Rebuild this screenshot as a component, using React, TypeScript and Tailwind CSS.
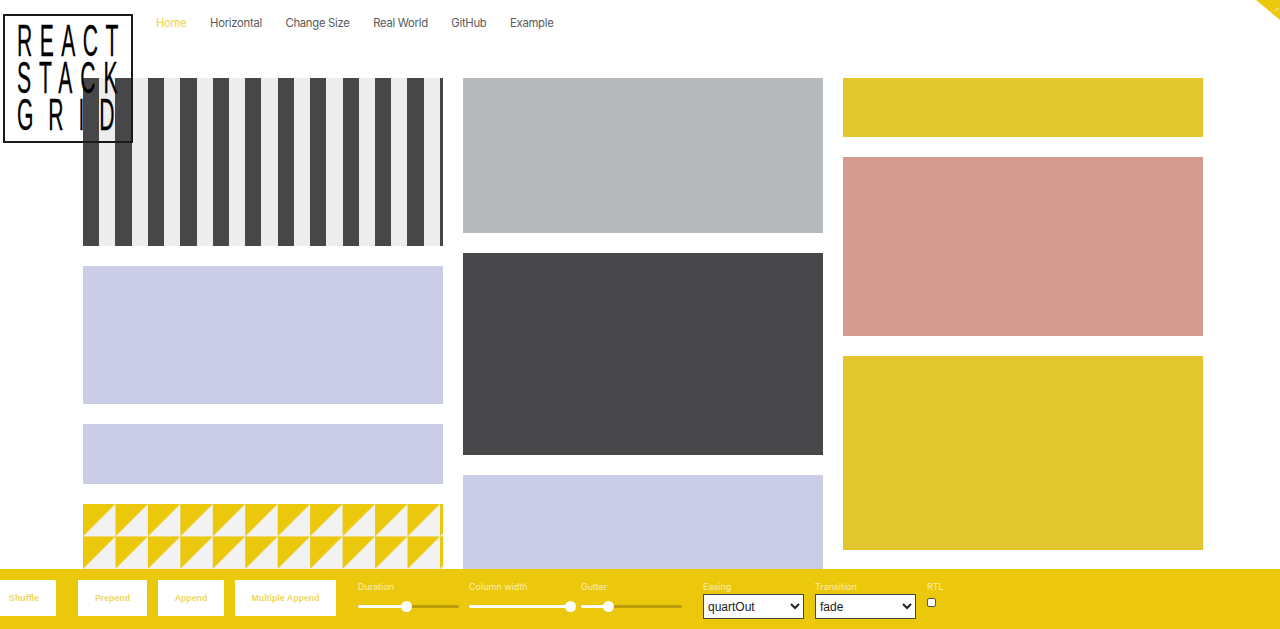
import { useState } from 'react';

const navLinks = ['Home', 'Horizontal', 'Change Size', 'Real World', 'GitHub', 'Example'];

function TrianglePattern() {
  return (
    <svg className="block w-full h-full" aria-hidden="true">
      <defs>
        <pattern id="triangles" x="0" y="0" width="32.45" height="32.45" patternUnits="userSpaceOnUse">
          <rect width="32.45" height="32.45" fill="#f2f2f2" />
          <path d="M0 0H32.45L0 32.45Z" fill="#ecc80d" />
        </pattern>
      </defs>
      <rect width="100%" height="100%" fill="url(#triangles)" />
    </svg>
  );
}

function Slider({ label, percent, className }: { label: string; percent: number; className: string }) {
  return (
    <div className={`flex flex-col w-[101px] ${className}`}>
      <span className="text-[9px] leading-[12px] text-[#fbeeb0]">{label}</span>
      <div className="relative h-[3px] mt-[12px] rounded-full bg-[#b89c0a]">
        <div className="h-full rounded-full bg-white" style={{ width: `${percent}%` }} />
        <div
          className="absolute top-[-4px] w-[11px] h-[11px] -ml-[5px] rounded-full bg-white"
          style={{ left: `${percent}%` }}
        />
      </div>
    </div>
  );
}

function SelectField({ label, value, options, className }: { label: string; value: string; options: string[]; className: string }) {
  const [current, setCurrent] = useState(value);
  return (
    <div className={`flex flex-col w-[101px] ${className}`}>
      <span className="text-[9px] leading-[12px] text-[#fbeeb0]">{label}</span>
      <select
        value={current}
        onChange={(e) => setCurrent(e.target.value)}
        className="h-[25px] mt-[1px] appearance-auto bg-white border border-[#444] text-[12px] text-[#222] font-['Liberation_Sans',sans-serif]"
      >
        {options.map((o) => (
          <option key={o}>{o}</option>
        ))}
      </select>
    </div>
  );
}

function ActionButton({ label, className }: { label: string; className: string }) {
  return (
    <button className={`h-[36px] mt-[11px] pt-[1px] bg-white text-[8.8px] font-bold text-[#f1d75a] font-['Liberation_Sans',sans-serif] ${className}`}>
      {label}
    </button>
  );
}

export default function App() {
  return (
    <div className="relative h-screen overflow-hidden bg-white font-['Inter',sans-serif]">
      <header className="absolute inset-x-0 top-0 flex items-start">
        <a className="mt-[14px] ml-[3px] w-[130px] h-[129px] pt-[6px] pl-[12px] border-2 border-[#1a1a1a] flex flex-col font-['Liberation_Sans_Narrow','Liberation_Sans',sans-serif] text-black text-[44px] leading-[37px] [-webkit-text-stroke:0.3px_black]">
          <span className="w-[101px] whitespace-nowrap origin-left scale-x-[0.48] tracking-[15.5px]">REACT</span>
          <span className="w-[101px] whitespace-nowrap origin-left scale-x-[0.48] tracking-[16.5px]">STACK</span>
          <span className="w-[101px] whitespace-nowrap origin-left scale-x-[0.48] tracking-[31px]">GRID</span>
        </a>
        <nav className="flex gap-[23.5px] ml-[23px] mt-[15px] text-[11.3px] leading-[16px] tracking-[-0.28px] text-[#5a5a5a]">
          {navLinks.map((link) => (
            <a key={link} className={link === 'Home' ? 'text-[#f0d24a]' : ''}>
              {link}
            </a>
          ))}
        </nav>
      </header>

      <div className="absolute top-0 right-0 w-[24px] h-[20px] overflow-hidden">
        <div className="w-0 h-0 border-l-[24px] border-l-transparent border-t-[20px] border-t-[#ecc80d]" />
        <span className="absolute right-[1px] top-[7px] text-[6px] leading-[6px] rotate-[40deg] text-[#fbeeb0]">F</span>
      </div>

      <main className="grid grid-cols-[360px_360px_360px] gap-x-[20px] pt-[78px] pl-[83px]">
        <div className="flex flex-col gap-[20px]">
          <div className="h-[168px] bg-[repeating-linear-gradient(90deg,#474749_0,#474749_16.2px,#ededed_16.2px,#ededed_32.45px)]" />
          <div className="h-[138px] bg-[#cbcce6]" />
          <div className="h-[60px] bg-[#cbcce6]" />
          <div className="h-[120px]">
            <TrianglePattern />
          </div>
        </div>
        <div className="flex flex-col gap-[20px]">
          <div className="h-[155px] bg-[#b6babc]" />
          <div className="h-[202px] bg-[#474749]" />
          <div className="h-[140px] bg-[#cbcce6]" />
        </div>
        <div className="flex flex-col gap-[20px]">
          <div className="h-[59px] bg-[#e1c62e]" />
          <div className="h-[179px] bg-[#d49c8e]" />
          <div className="h-[194px] bg-[#e1c62e]" />
        </div>
      </main>

      <footer className="absolute inset-x-0 bottom-0 h-[60px] flex items-start bg-[#ecc80d] overflow-hidden">
        <ActionButton label="Shuffle" className="w-[64px] -ml-[8px]" />
        <ActionButton label="Prepend" className="w-[69px] ml-[22px]" />
        <ActionButton label="Append" className="w-[66px] ml-[11px]" />
        <ActionButton label="Multiple Append" className="w-[101px] ml-[11px]" />
        <Slider label="Duration" percent={48} className="ml-[22px] mt-[12px]" />
        <Slider label="Column width" percent={100} className="ml-[10px] mt-[12px]" />
        <Slider label="Gutter" percent={27} className="ml-[11px] mt-[12px]" />
        <SelectField label="Easing" value="quartOut" options={['quartOut', 'linear', 'expoOut']} className="ml-[21px] mt-[12px]" />
        <SelectField label="Transition" value="fade" options={['fade', 'fadeDown', 'fadeUp']} className="ml-[11px] mt-[12px]" />
        <div className="flex flex-col ml-[11px] mt-[12px]">
          <span className="text-[9px] leading-[12px] text-[#fbeeb0]">RTL</span>
          <input type="checkbox" className="w-[9px] h-[9px] mt-[5px] appearance-none bg-white border border-[#555] rounded-[2px]" />
        </div>
      </footer>
    </div>
  );
}
